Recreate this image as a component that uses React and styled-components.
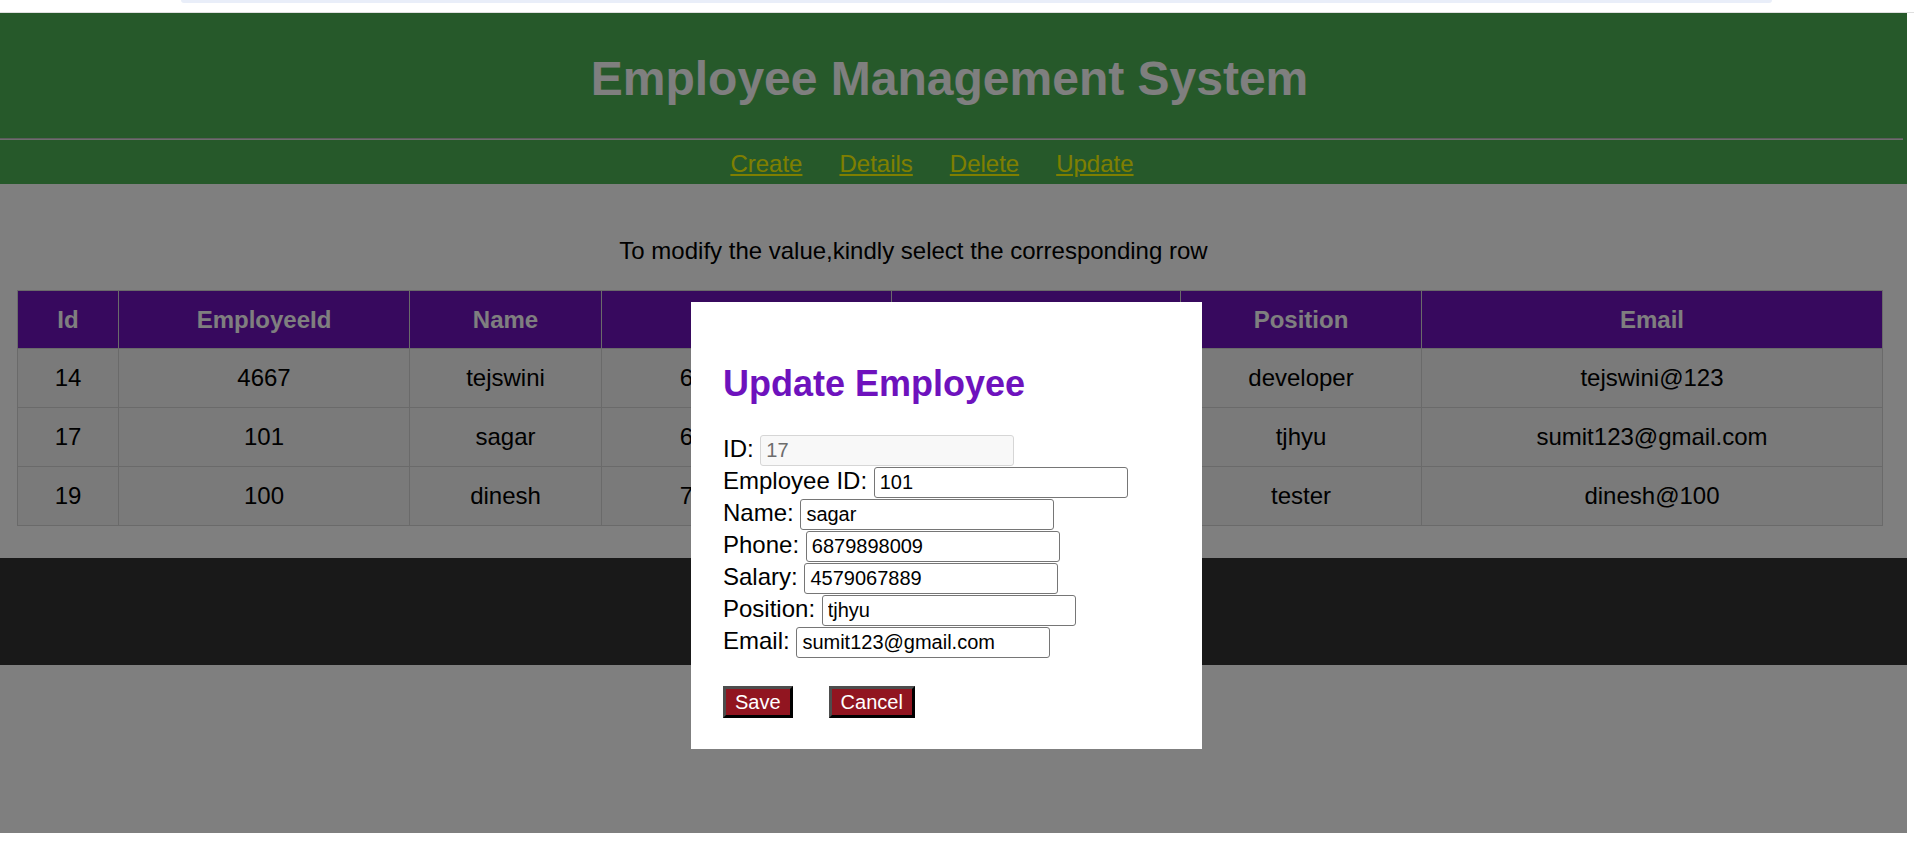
import React, { useState } from 'react';
import styled, { createGlobalStyle } from 'styled-components';

const GlobalStyle = createGlobalStyle`
  html, body {
    margin: 0;
    padding: 0;
    background: #ffffff;
  }
  body {
    font-family: "Liberation Sans", Arial, sans-serif;
  }
  * {
    box-sizing: border-box;
  }
`;

const employees = [
  { id: 14, employeeId: 4667, name: 'tejswini', phone: '6879898009', salary: '4579067889', position: 'developer', email: 'tejswini@123' },
  { id: 17, employeeId: 101, name: 'sagar', phone: '6879898009', salary: '4579067889', position: 'tjhyu', email: 'sumit123@gmail.com' },
  { id: 19, employeeId: 100, name: 'dinesh', phone: '7879898009', salary: '4579067889', position: 'tester', email: 'dinesh@100' },
];

const columns = [
  { label: 'Id', width: 101 },
  { label: 'EmployeeId', width: 291 },
  { label: 'Name', width: 192 },
  { label: 'Phone', width: 290 },
  { label: 'Salary', width: 289 },
  { label: 'Position', width: 241 },
  { label: 'Email', width: 461 },
];

const App = () => {
  const [selected, setSelected] = useState(employees[1]);
  const [open, setOpen] = useState(true);

  const fields = [
    { key: 'id', label: 'ID:', disabled: true },
    { key: 'employeeId', label: 'Employee ID:' },
    { key: 'name', label: 'Name:' },
    { key: 'phone', label: 'Phone:' },
    { key: 'salary', label: 'Salary:' },
    { key: 'position', label: 'Position:' },
    { key: 'email', label: 'Email:' },
  ];

  const handleChange = (key, value) => {
    setSelected({ ...selected, [key]: value });
  };

  return (
    <Frame>
      <GlobalStyle />
      <TopStrip>
        <TopBar />
      </TopStrip>
      <Viewport>
        <Header>
          <Title>Employee Management System</Title>
          <Divider />
          <Nav>
            <NavLink href="#create">Create</NavLink>
            <NavLink href="#details">Details</NavLink>
            <NavLink href="#delete">Delete</NavLink>
            <NavLink href="#update">Update</NavLink>
          </Nav>
        </Header>

        <Main>
          <Hint>To modify the value,kindly select the corresponding row</Hint>
          <Table>
            <thead>
              <tr>
                {columns.map(col => (
                  <Th key={col.label} style={{ width: col.width }}>{col.label}</Th>
                ))}
              </tr>
            </thead>
            <tbody>
              {employees.map(emp => (
                <tr key={emp.id} onClick={() => { setSelected(emp); setOpen(true); }}>
                  <Td>{emp.id}</Td>
                  <Td>{emp.employeeId}</Td>
                  <Td>{emp.name}</Td>
                  <Td>{emp.phone}</Td>
                  <Td>{emp.salary}</Td>
                  <Td>{emp.position}</Td>
                  <Td>{emp.email}</Td>
                </tr>
              ))}
            </tbody>
          </Table>
        </Main>

        <Footer />

        {open && (
          <Overlay>
            <Modal>
              <ModalTitle>Update Employee</ModalTitle>
              <Form onSubmit={e => e.preventDefault()}>
                {fields.map(field => (
                  <FieldRow key={field.key}>
                    <FieldLabel>{field.label}</FieldLabel>
                    <Input
                      value={selected[field.key]}
                      disabled={field.disabled}
                      onChange={e => handleChange(field.key, e.target.value)}
                    />
                  </FieldRow>
                ))}
                <Actions>
                  <ActionButton type="submit">Save</ActionButton>
                  <ActionButton type="button" onClick={() => setOpen(false)}>Cancel</ActionButton>
                </Actions>
              </Form>
            </Modal>
          </Overlay>
        )}
      </Viewport>
    </Frame>
  );
};

export default App;

const Frame = styled.div`
  width: 1914px;
  height: 851px;
  background: #ffffff;
  overflow: hidden;
`;

const TopStrip = styled.div`
  height: 13px;
  border-bottom: 1px solid #dfdfdf;
  padding: 0 142px 0 181px;
`;

const TopBar = styled.div`
  height: 3px;
  background: #e9eef9;
  border-radius: 0 0 6px 6px;
`;

const Viewport = styled.div`
  position: relative;
  width: 1907px;
  height: 820px;
  background: #ffffff;
  overflow: hidden;
`;

const Header = styled.header`
  background: #4cb254;
`;

const Title = styled.h1`
  margin: 0;
  height: 125px;
  padding: 38px 8px 0 0;
  text-align: center;
  font-size: 48px;
  line-height: 55px;
  font-weight: bold;
  color: #ffffff;
`;

const Divider = styled.div`
  height: 2px;
  margin-right: 4px;
  border-top: 1px solid #b8b8b8;
  background: #dcdcdc;
`;

const Nav = styled.nav`
  display: flex;
  justify-content: center;
  gap: 37px;
  height: 44px;
  padding: 10px 43px 0 0;
`;

const NavLink = styled.a`
  font-size: 24px;
  line-height: 28px;
  color: #ffff00;
  text-decoration: underline;
`;

const Main = styled.main`
  padding-top: 53px;
`;

const Hint = styled.p`
  margin: 0 0 25px;
  padding-right: 80px;
  text-align: center;
  font-size: 24px;
  line-height: 28px;
  color: #000000;
`;

const Table = styled.table`
  margin-left: 17px;
  width: 1865px;
  border-collapse: collapse;
  table-layout: fixed;
  border: 1px solid #d4d4d4;
`;

const Th = styled.th`
  padding: 15px 0 14px;
  background: #6e12bd;
  color: #ffffff;
  font-size: 24px;
  line-height: 28px;
  font-weight: bold;
  text-align: center;
  border: 1px solid #d4d4d4;
`;

const Td = styled.td`
  padding: 15px 0;
  background: #f4f4f4;
  color: #000000;
  font-size: 24px;
  line-height: 28px;
  text-align: center;
  border: 1px solid #d4d4d4;
  cursor: pointer;
`;

const Footer = styled.footer`
  margin-top: 32px;
  height: 107px;
  background: #333333;
`;

const Overlay = styled.div`
  position: absolute;
  inset: 0;
  display: flex;
  justify-content: center;
  align-items: flex-start;
  padding: 289px 14px 0 0;
  background: rgba(0, 0, 0, 0.5);
`;

const Modal = styled.div`
  width: 511px;
  padding: 31px 32px 31px;
  background: #ffffff;
`;

const ModalTitle = styled.h2`
  margin: 30px 0 31px;
  font-size: 36px;
  line-height: 41px;
  font-weight: bold;
  color: #6e12bd;
`;

const Form = styled.form`
  margin: 0;
`;

const FieldRow = styled.div`
  display: flex;
  align-items: baseline;
  gap: 6.7px;
  height: 32px;
`;

const FieldLabel = styled.label`
  font-size: 24px;
  line-height: 28px;
  color: #000000;
`;

const Input = styled.input`
  width: 254px;
  height: 31px;
  padding: 0 5px;
  font-family: "Liberation Sans", Arial, sans-serif;
  font-size: 20px;
  color: #000000;
  background: #ffffff;
  border: 1px solid #767676;
  border-radius: 3px;

  &:disabled {
    color: #6d6d6d;
    background: #f8f8f8;
    border-color: #d6d6d6;
  }
`;

const Actions = styled.div`
  display: flex;
  gap: 36px;
  margin-top: 27px;
`;

const ActionButton = styled.button`
  padding: 1px 9px;
  font-family: "Liberation Sans", Arial, sans-serif;
  font-size: 20px;
  line-height: 24px;
  color: #ffffff;
  background: #911520;
  border: 3px solid;
  border-color: #4d4d4d #000000 #000000 #4d4d4d;
  cursor: pointer;
`;
